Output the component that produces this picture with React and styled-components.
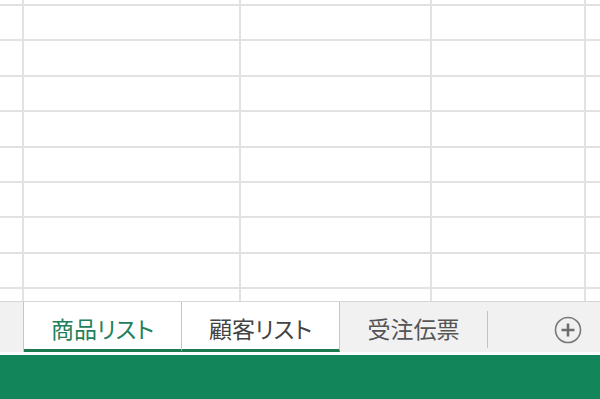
import React from "react";
import styled, { createGlobalStyle } from "styled-components";

const Global = createGlobalStyle`
  html, body { margin: 0; padding: 0; background: #fff; }
  body { width: 600px; height: 399px; overflow: hidden; font-family: "Noto Sans CJK JP", "Noto Sans", sans-serif; }
`;

const Frame = styled.div`
  width: 600px;
  height: 399px;
  display: flex;
  flex-direction: column;
  overflow: hidden;
`;

const Sheet = styled.div`
  height: 301px;
  overflow: hidden;
  flex: none;
  background: #e2e2e2;
  display: grid;
  grid-template-columns: 22px 215px 189px 152px 1fr;
  grid-template-rows: 4px;
  grid-auto-rows: 33.4px;
  gap: 2px;
`;

const Cell = styled.div`
  background: #fff;
`;

const TabBar = styled.div`
  height: 51px;
  flex: none;
  background: #f1f1f1;
  border-top: 1px solid #d6d6d6;
  box-sizing: border-box;
  display: flex;
  align-items: stretch;
`;

const Lead = styled.div`
  width: 24px;
  border-right: 1px solid #c6c6c6;
  box-sizing: border-box;
`;

const Tab = styled.div`
  width: ${(p) => p.$w}px;
  box-sizing: border-box;
  display: flex;
  align-items: center;
  justify-content: center;
  font-size: 23px;
  font-feature-settings: "palt";
  padding-top: 5px;
  color: ${(p) => (p.$active ? "#22805a" : p.$selected ? "#444" : "#555")};
  background: ${(p) => (p.$selected ? "#fff" : "transparent")};
  border-bottom: ${(p) => (p.$selected ? "3px solid #1b7a4e" : "3px solid transparent")};
  border-right: ${(p) => (p.$selected ? "1px solid #c6c6c6" : "none")};
`;

const Sep = styled.div`
  width: 1px;
  background: #c3c3c3;
  margin: 9px 0 4px;
`;

const AddArea = styled.div`
  flex: 1;
  display: flex;
  align-items: center;
  justify-content: flex-end;
  padding-right: 18px;
  padding-top: 6px;
`;

const StatusBar = styled.div`
  flex: 1;
  background: #13855a;
  border-top: 3px solid #fff;
`;

const ROWS = 10;
const COLS = 5;

export default function App() {
  const cells = [];
  for (let r = 0; r < ROWS; r++) {
    for (let c = 0; c < COLS; c++) cells.push(<Cell key={`${r}-${c}`} />);
  }
  return (
    <Frame>
      <Global />
      <Sheet>{cells}</Sheet>
      <TabBar>
        <Lead />
        <Tab $w={158} $selected $active>商品リスト</Tab>
        <Tab $w={158} $selected>顧客リスト</Tab>
        <Tab $w={147}>受注伝票</Tab>
        <Sep />
        <AddArea>
          <svg width="28" height="28" viewBox="0 0 28 28">
            <circle cx="14" cy="14" r="12.5" fill="none" stroke="#7a7a7a" strokeWidth="1.6" />
            <path d="M14 7.5v13M7.5 14h13" stroke="#6e6e6e" strokeWidth="2.6" />
          </svg>
        </AddArea>
      </TabBar>
      <StatusBar />
    </Frame>
  );
}
